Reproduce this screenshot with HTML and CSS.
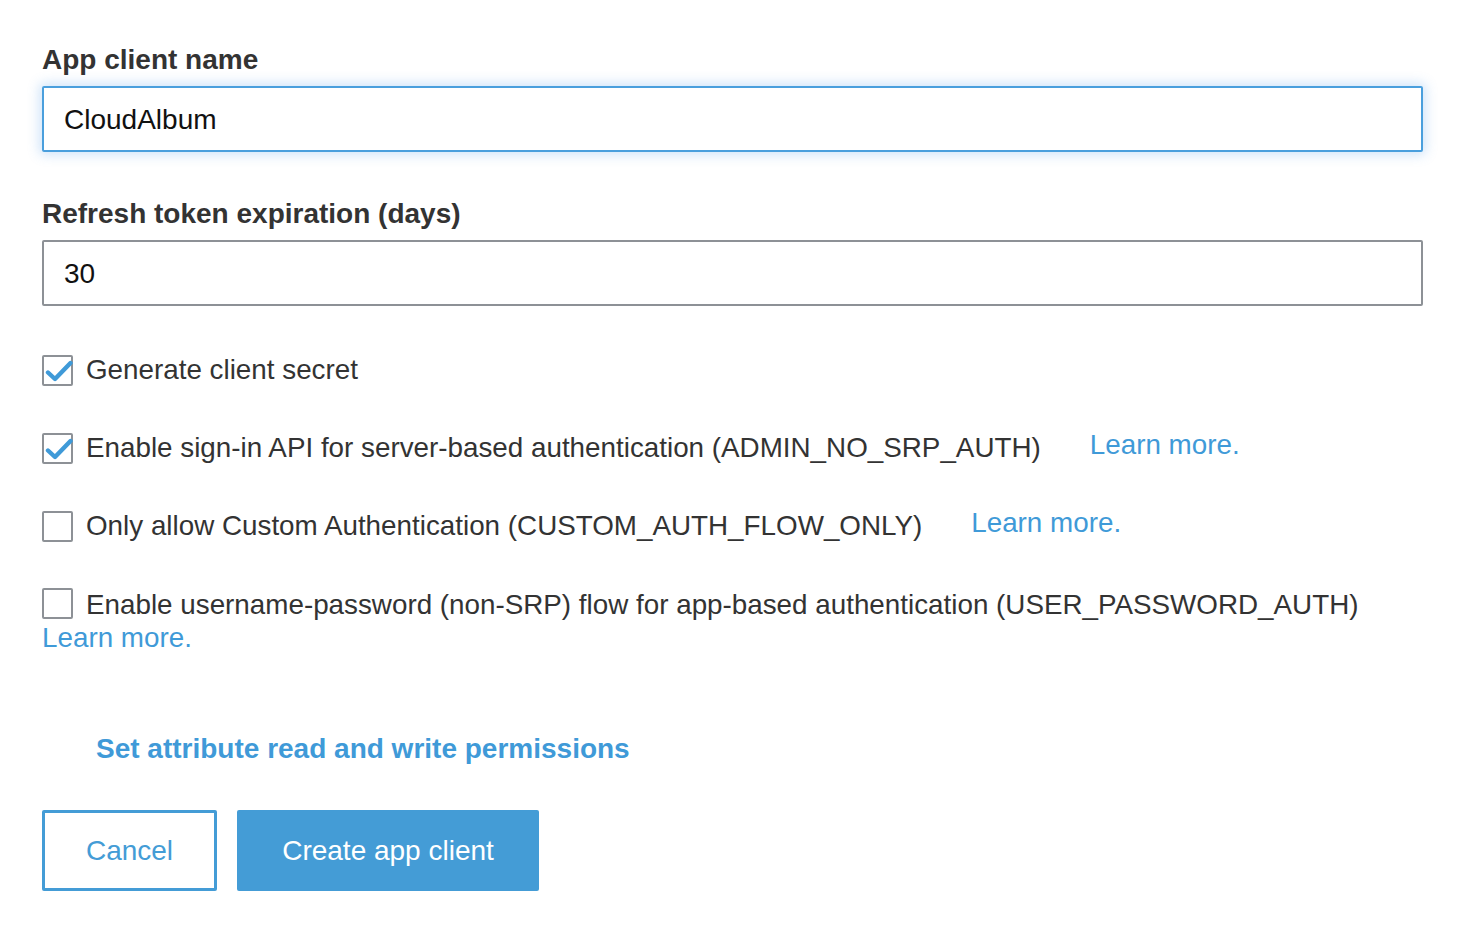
FILE: index.html
```html
<!DOCTYPE html>
<html>
<head>
<meta charset="utf-8">
<link rel="stylesheet" href="styles.css">
</head>
<body>
<div class="form">
  <div class="field-label">App client name</div>
  <div class="input focused">CloudAlbum</div>

  <div class="field-label second">Refresh token expiration (days)</div>
  <div class="input">30</div>

  <div class="options">
    <div class="opt">
      <span class="box checked"><svg viewBox="0 0 31 31" width="31" height="31"><path d="M6 17.5 L13 24 L28.5 8" fill="none" stroke="#3f9ad8" stroke-width="4.4" stroke-linecap="round" stroke-linejoin="round"/></svg></span><span class="opt-text">Generate client secret</span>
    </div>
    <div class="opt">
      <span class="box checked"><svg viewBox="0 0 31 31" width="31" height="31"><path d="M6 17.5 L13 24 L28.5 8" fill="none" stroke="#3f9ad8" stroke-width="4.4" stroke-linecap="round" stroke-linejoin="round"/></svg></span><span class="opt-text">Enable sign-in API for server-based authentication (ADMIN_NO_SRP_AUTH)</span><a class="learn">Learn more.</a>
    </div>
    <div class="opt">
      <span class="box"></span><span class="opt-text">Only allow Custom Authentication (CUSTOM_AUTH_FLOW_ONLY)</span><a class="learn">Learn more.</a>
    </div>
    <div class="opt wrap">
      <span class="box"></span><span class="opt-text">Enable username-password (non-SRP) flow for app-based authentication (USER_PASSWORD_AUTH)</span> <a class="learn next">Learn more.</a>
    </div>
  </div>

  <a class="perm">Set attribute read and write permissions</a>

  <div class="actions">
    <button class="btn cancel">Cancel</button>
    <button class="btn primary">Create app client</button>
  </div>
</div>
</body>
</html>
```

FILE: styles.css
```css
html, body {
  margin: 0;
  padding: 0;
  background: #ffffff;
}

body {
  font-family: "Liberation Sans", Arial, Helvetica, sans-serif;
  color: #333333;
}

.form {
  width: 1381px;
  padding: 43px 0 0 42px;
}

.field-label {
  font-size: 28px;
  line-height: 34px;
  font-weight: bold;
  color: #333333;
  margin-bottom: 9px;
}

.field-label.second {
  margin-top: 45px;
}

.input {
  box-sizing: border-box;
  height: 66px;
  border: 2px solid #8d9196;
  border-radius: 2px;
  padding: 0 0 0 20px;
  font-size: 28px;
  line-height: 64px;
  color: #111111;
}

.input.focused {
  border-color: #4a9fdd;
  box-shadow: 0 0 12px 3px rgba(74, 150, 230, 0.26);
}

.options {
  margin-top: 48px;
}

.opt {
  display: flex;
  align-items: center;
  height: 32px;
  margin-bottom: 46px;
  font-size: 27.8px;
  line-height: 32px;
}

.box {
  box-sizing: border-box;
  flex: none;
  position: relative;
  width: 31px;
  height: 31px;
  border: 2px solid #8d9196;
  border-radius: 2px;
  margin-right: 13px;
  background: #fff;
}

.box svg {
  position: absolute;
  left: -2px;
  top: -2px;
}

.opt-text {
  color: #333333;
  white-space: nowrap;
}

.learn {
  color: #3f9ad8;
  font-size: 27.8px;
  margin-left: 49px;
  position: relative;
  top: -3px;
  cursor: pointer;
}

.opt.wrap {
  display: block;
  height: auto;
  line-height: 33px;
  margin-bottom: 0;
}

.opt.wrap .box {
  display: inline-block;
  vertical-align: -5px;
}

.opt.wrap .learn.next {
  display: block;
  margin-left: 0;
  top: 0;
}

.perm {
  display: block;
  margin: 79px 0 0 54px;
  font-size: 28px;
  line-height: 32px;
  font-weight: bold;
  color: #3f9ad8;
  cursor: pointer;
}

.actions {
  display: flex;
  gap: 20px;
  margin-top: 45px;
}

.btn {
  box-sizing: border-box;
  height: 81px;
  font-family: "Liberation Sans", Arial, Helvetica, sans-serif;
  font-size: 28px;
  border-radius: 2px;
  cursor: pointer;
}

.btn.cancel {
  width: 175px;
  background: #fff;
  border: 3px solid #449cd6;
  color: #449cd6;
}

.btn.primary {
  width: 302px;
  background: #449cd6;
  border: none;
  color: #ffffff;
}
```
